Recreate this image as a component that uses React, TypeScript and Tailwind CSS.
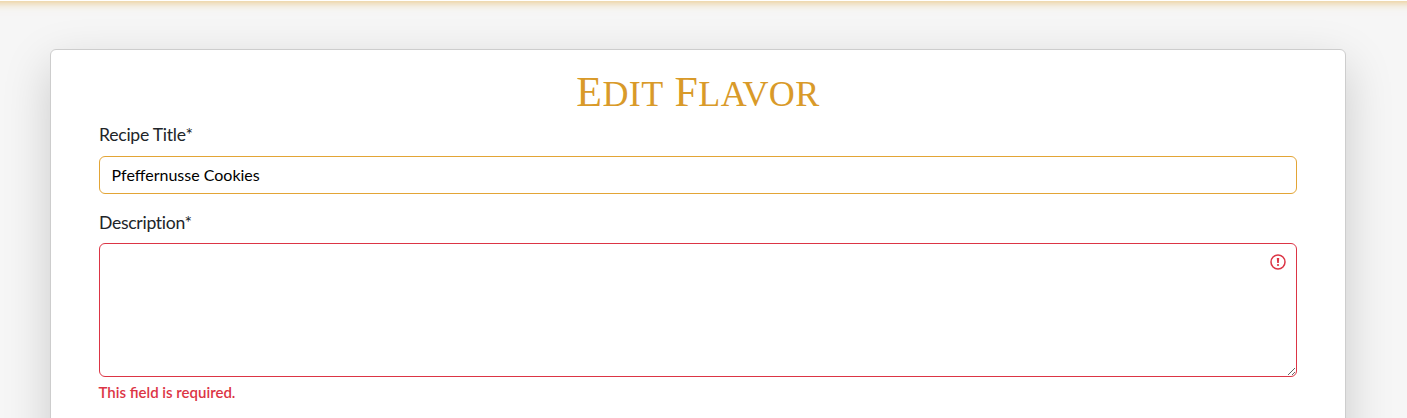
export default function App() {
  return (
    <div className="h-[418px] overflow-hidden bg-[#f6f6f6] font-['Lato',sans-serif] text-[#212529]">
      <header className="-mx-3 -mt-[63px] h-16 bg-white shadow-[0_0_10px_rgba(224,164,50,0.75)]" />
      <main className="px-[50px] pt-12">
        <section className="h-[480px] w-[1296px] rounded-md border border-[#cdcdcd] bg-white px-12 pt-[21px] shadow-[0_16px_48px_rgba(0,0,0,0.175)]">
          <h1 className="flex h-[42px] items-baseline justify-center whitespace-pre font-['Liberation_Serif',serif] text-[42px] leading-[42px] tracking-[0.4px] text-[#d99a29]">
            <span>E<span className="text-[36px]">DIT</span> F<span className="text-[36px]">LAVOR</span></span>
          </h1>
          <form>
            <label htmlFor="title" className="block h-[43px] pt-[9px] text-[17.6px] leading-[26px] tracking-[-0.25px] [font-variant-ligatures:none]">Recipe Title*</label>
            <input
              id="title"
              defaultValue="Pfeffernusse Cookies"
              className="block h-[38px] w-full rounded-md border border-[#e3a536] bg-white px-[11.5px] pb-0.5 text-base text-black outline-none"
            />
            <label htmlFor="description" className="block h-[49px] pt-4 text-[17.6px] leading-[26px] tracking-[-0.3px] [font-variant-ligatures:none]">Description*</label>
            <div className="relative">
              <textarea
                id="description"
                className="block h-[134px] w-full rounded-md border border-[#dc3545] bg-white px-3 py-1.5 outline-none"
              />
              <svg viewBox="0 0 16 16" className="pointer-events-none absolute right-[11px] top-[11px] h-4 w-4" fill="none" stroke="#dc3545">
                <circle cx="8" cy="8" r="7" strokeWidth="1.5" />
                <path d="M6.8 4h2.4l-.4 5H7.2z" fill="#dc3545" stroke="none" />
                <circle cx="8" cy="11" r="1.1" fill="#dc3545" stroke="none" />
              </svg>
            </div>
            <p className="mt-1 -ml-[0.5px] text-[15px] font-semibold leading-[23px] text-[#dc3545]">This field is required.</p>
          </form>
        </section>
      </main>
    </div>
  );
}
